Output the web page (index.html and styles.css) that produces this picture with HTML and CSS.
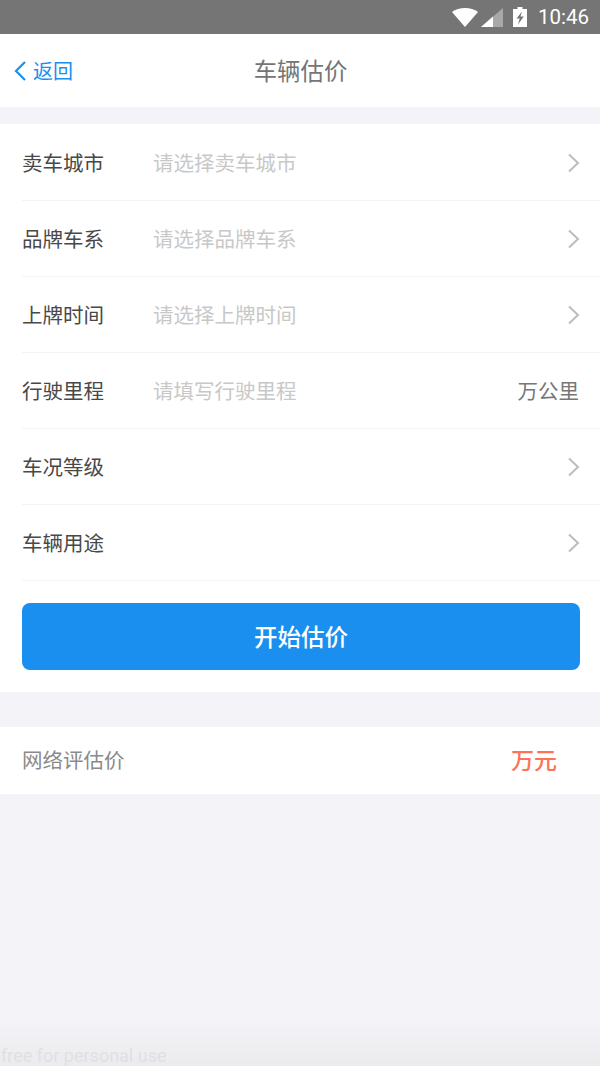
FILE: index.html
```html
<!DOCTYPE html>
<html lang="zh-CN">
<head>
    <meta charset="UTF-8">
    <meta name="viewport" content="width=device-width, initial-scale=1.0">
    <title>车辆估价</title>
    <link rel="stylesheet" href="styles.css">
</head>
<body>
    <div class="page">
        <div class="status-bar">
            <svg class="icon-wifi" width="26" height="19" viewBox="0 0 26 19"><path d="M0 4C3.500 1.200 8 0 13 0s9.500 1.200 13 4L13 19z" fill="#fff"/></svg>
            <svg class="icon-signal" width="22" height="19" viewBox="0 0 22 19"><path d="M0 19L22 0v19z" fill="#a8a8a8"/><path d="M0 19L12 8.600V19z" fill="#fff"/></svg>
            <svg class="icon-battery" width="14" height="20" viewBox="0 0 14 20"><path d="M4.500 0h5v2H14v18H0V2h4.500z" fill="#fff"/><path d="M9 4.500L3.500 11.500h3.200L5 17.500l5.800-8H7.500z" fill="#757575"/></svg>
            <span class="clock">10:46</span>
        </div>

        <div class="nav-bar">
            <div class="back">
                <svg width="14" height="22" viewBox="0 0 14 22"><path d="M12 2L3 11l9 9" fill="none" stroke="#1a8ff0" stroke-width="2.200"/></svg>
                <span>返回</span>
            </div>
            <div class="nav-title">车辆估价</div>
        </div>

        <div class="form">
            <div class="row">
                <span class="row-label">卖车城市</span>
                <span class="row-value">请选择卖车城市</span>
                <svg class="arrow" width="13" height="20" viewBox="0 0 13 20"><path d="M2 1.500L11 10l-9 8.500" fill="none" stroke="#bdbdbd" stroke-width="2"/></svg>
            </div>
            <div class="row">
                <span class="row-label">品牌车系</span>
                <span class="row-value">请选择品牌车系</span>
                <svg class="arrow" width="13" height="20" viewBox="0 0 13 20"><path d="M2 1.500L11 10l-9 8.500" fill="none" stroke="#bdbdbd" stroke-width="2"/></svg>
            </div>
            <div class="row">
                <span class="row-label">上牌时间</span>
                <span class="row-value">请选择上牌时间</span>
                <svg class="arrow" width="13" height="20" viewBox="0 0 13 20"><path d="M2 1.500L11 10l-9 8.500" fill="none" stroke="#bdbdbd" stroke-width="2"/></svg>
            </div>
            <div class="row">
                <span class="row-label">行驶里程</span>
                <span class="row-value">请填写行驶里程</span>
                <span class="row-unit">万公里</span>
            </div>
            <div class="row">
                <span class="row-label">车况等级</span>
                <span class="row-value"></span>
                <svg class="arrow" width="13" height="20" viewBox="0 0 13 20"><path d="M2 1.500L11 10l-9 8.500" fill="none" stroke="#bdbdbd" stroke-width="2"/></svg>
            </div>
            <div class="row">
                <span class="row-label">车辆用途</span>
                <span class="row-value"></span>
                <svg class="arrow" width="13" height="20" viewBox="0 0 13 20"><path d="M2 1.500L11 10l-9 8.500" fill="none" stroke="#bdbdbd" stroke-width="2"/></svg>
            </div>
            <button class="submit">开始估价</button>
        </div>

        <div class="result">
            <span class="result-label">网络评估价</span>
            <span class="result-value">万元</span>
        </div>

        <div class="footer-mark">free for personal use</div>
    </div>
</body>
</html>
```

FILE: styles.css
```css
* {
    box-sizing: border-box;
}
html, body {
    margin: 0;
    height: 100%;
}
body {
    font-family: "Noto Sans CJK SC", "Liberation Sans", sans-serif;
    background-color: #f4f4f8;
}
.page {
    display: flex;
    flex-direction: column;
    height: 1066px;
    overflow: hidden;
    background: linear-gradient(to bottom, #f4f4f8 0, #f4f4f8 1020px, #ebebee 1066px);
}
.status-bar {
    display: flex;
    align-items: center;
    justify-content: flex-end;
    height: 34px;
    padding-right: 11px;
    background-color: #757575;
}
.icon-wifi {
    margin-right: 3px;
}
.icon-signal {
    margin-right: 10px;
}
.icon-battery {
    margin-right: 11px;
}
.clock {
    font-family: Roboto, sans-serif;
    font-size: 20.500px;
    color: #fff;
}
.nav-bar {
    display: flex;
    align-items: center;
    justify-content: center;
    position: relative;
    height: 73px;
    background-color: #fff;
}
.back {
    position: absolute;
    left: 13px;
    top: 0;
    height: 73px;
    display: flex;
    align-items: center;
    gap: 6px;
    font-size: 20px;
    color: #1a8ff0;
}
.nav-title {
    padding: 0 0 2px 1px;
    font-size: 23.400px;
    color: #757575;
}
.form {
    margin-top: 17px;
    padding: 1px 0 22px 22px;
    background-color: #fff;
}
.row {
    display: flex;
    align-items: center;
    height: 76px;
    padding-right: 20px;
    border-bottom: 1px solid #f4f4f6;
}
.row-label {
    width: 131px;
    padding-bottom: 2px;
    font-size: 20.500px;
    color: #484848;
}
.row-value {
    flex: 1;
    padding-bottom: 2px;
    font-size: 20.500px;
    color: #c8c8c8;
}
.row-unit {
    margin-right: 1px;
    padding-bottom: 2px;
    font-size: 20.500px;
    color: #777;
}
.arrow {
    display: block;
}
.submit {
    display: block;
    width: 558px;
    height: 67px;
    margin-top: 22px;
    padding: 0 0 2px;
    border: none;
    border-radius: 8px;
    background-color: #1a8ff0;
    color: #fff;
    font-family: inherit;
    font-size: 23.500px;
    font-weight: 500;
}
.result {
    display: flex;
    align-items: center;
    justify-content: space-between;
    height: 67px;
    margin-top: 35px;
    padding: 0 43px 0 22px;
    background-color: #fff;
}
.result-label {
    padding-bottom: 4px;
    font-size: 20.500px;
    color: #8a8a8a;
}
.result-value {
    padding-bottom: 4px;
    font-size: 23px;
    font-weight: 500;
    color: #ff7256;
}
.footer-mark {
    margin-top: auto;
    padding: 0 0 0 1px;
    font-family: Roboto, sans-serif;
    font-size: 18px;
    line-height: 21px;
    color: #e0e0e3;
}
```
